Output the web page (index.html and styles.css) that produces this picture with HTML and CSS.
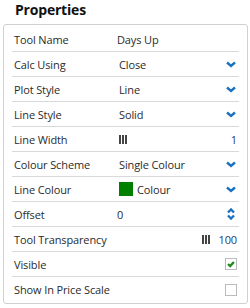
FILE: index.html
```html
<!DOCTYPE html>
<html lang="en">
  <head>
    <meta charset="UTF-8" />
    <title>Properties</title>
    <link rel="stylesheet" href="styles.css">
  </head>
  <body>
    <h1 class="title">Properties</h1>
    <div class="panel">
      <div class="row">
        <span class="label">Tool Name</span>
        <span class="value plain">Days Up</span>
      </div>
      <div class="row">
        <span class="label">Calc Using</span>
        <span class="value">Close</span>
        <svg class="chev" viewBox="0 0 10 7"><path d="M1 1.5l4 3.5 4-3.5" /></svg>
      </div>
      <div class="row">
        <span class="label">Plot Style</span>
        <span class="value">Line</span>
        <svg class="chev" viewBox="0 0 10 7"><path d="M1 1.5l4 3.5 4-3.5" /></svg>
      </div>
      <div class="row">
        <span class="label">Line Style</span>
        <span class="value">Solid</span>
        <svg class="chev" viewBox="0 0 10 7"><path d="M1 1.5l4 3.5 4-3.5" /></svg>
      </div>
      <div class="row">
        <span class="label">Line Width</span>
        <span class="value"><span class="grip"></span></span>
        <span class="num">1</span>
      </div>
      <div class="row">
        <span class="label">Colour Scheme</span>
        <span class="value">Single Colour</span>
        <svg class="chev" viewBox="0 0 10 7"><path d="M1 1.5l4 3.5 4-3.5" /></svg>
      </div>
      <div class="row">
        <span class="label">Line Colour</span>
        <span class="value colour"><span class="swatch"></span>Colour</span>
        <svg class="chev" viewBox="0 0 10 7"><path d="M1 1.5l4 3.5 4-3.5" /></svg>
      </div>
      <div class="row">
        <span class="label">Offset</span>
        <span class="value plain">0</span>
        <svg class="spin" viewBox="0 0 8 12"><path d="M1 4.5l3-3 3 3M1 7.5l3 3 3-3" /></svg>
      </div>
      <div class="row">
        <span class="label">Tool Transparency</span>
        <span class="value"></span>
        <span class="grip"></span>
        <span class="num">100</span>
      </div>
      <div class="row">
        <span class="label">Visible</span>
        <span class="value"></span>
        <span class="check">
          <svg viewBox="0 0 12 12"><path d="M2.5 6l2.5 2.5 4.5-5" /></svg>
        </span>
      </div>
      <div class="row">
        <span class="label">Show In Price Scale</span>
        <span class="value"></span>
        <span class="check"></span>
      </div>
    </div>
  </body>
</html>
```

FILE: styles.css
```css
* {
  box-sizing: border-box;
  margin: 0;
  padding: 0;
}

body {
  font-family: "Open Sans", sans-serif;
  font-size: 11px;
  letter-spacing: -0.12px;
  color: #2b2b2b;
  background: #fff;
  padding: 0 2px 0 3px;
}

.title {
  font-size: 14px;
  font-weight: 700;
  letter-spacing: -0.2px;
  line-height: 20px;
  color: #111;
  padding: 0 0 4px 12px;
}

.panel {
  border: 1px solid #d0d0d0;
  border-radius: 3px;
  padding: 2px 8px 1px;
}

.row {
  display: flex;
  align-items: center;
  height: 25px;
  border-bottom: 1px solid #d9d9d9;
  padding: 0 2px;
  white-space: nowrap;
}

.row:last-child {
  border-bottom: none;
}

.label {
  width: 103px;
  flex: none;
}

.value {
  flex: 1;
  display: flex;
  align-items: center;
  padding-left: 2px;
}

.value.plain {
  padding-left: 0;
}

.chev {
  width: 10px;
  height: 7px;
  margin-right: 1px;
}

.chev path,
.spin path {
  fill: none;
  stroke: #1b72c0;
  stroke-width: 2.4;
}

.spin {
  width: 8px;
  height: 12px;
  margin-right: 2px;
}

.grip {
  width: 8px;
  height: 9px;
  border-left: 2px solid #444;
  border-right: 2px solid #444;
  position: relative;
}

.grip::after {
  content: "";
  position: absolute;
  left: 1px;
  top: 0;
  width: 2px;
  height: 9px;
  background: #444;
}

.num {
  margin-left: 8px;
  color: #2a3a6a;
}

.swatch {
  width: 14px;
  height: 14px;
  background: #008000;
  margin-right: 4px;
}

.check {
  width: 12px;
  height: 12px;
  border: 1px solid #bbb;
  background: #fff;
}

.check svg {
  display: block;
  width: 10px;
  height: 10px;
}

.check path {
  fill: none;
  stroke: #1e8a1e;
  stroke-width: 2.8;
}
```
